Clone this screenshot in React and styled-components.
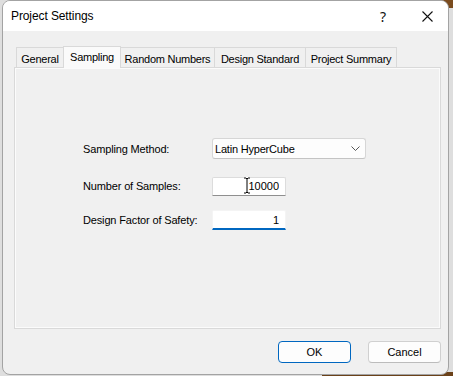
import React from 'react';
import styled, { createGlobalStyle } from 'styled-components';

const Global = createGlobalStyle`
  html, body { margin: 0; padding: 0; }
  body {
    width: 453px; height: 376px; overflow: hidden;
    font-family: "Liberation Sans", Arial, sans-serif;
    -webkit-font-smoothing: antialiased;
  }
`;

const Desktop = styled.div`
  width: 453px;
  height: 376px;
  box-sizing: border-box;
  padding: 0 4px 0 2px;
  background:
    linear-gradient(#7a4b1e, #7a4b1e) right top / 240px 8px no-repeat,
    linear-gradient(#6b4219, #6b4219) right bottom / 131px 4px no-repeat,
    #dedede;
`;

const Window = styled.div`
  width: 447px;
  height: 375px;
  box-sizing: border-box;
  border: 1px solid #a3a3a3;
  border-radius: 8px;
  overflow: hidden;
  background: #f0f0f0;
  display: flex;
  flex-direction: column;
`;

const TitleBar = styled.div`
  flex: 0 0 30px;
  display: flex;
  align-items: center;
  background: #ffffff;
  padding-left: 8px;
`;

const Title = styled.div`
  font-size: 12px;
  color: #000;
  flex: 1;
  letter-spacing: -0.1px;
`;

const CaptionButton = styled.div`
  width: ${p => p.$w}px;
  height: 30px;
  display: flex;
  align-items: center;
  justify-content: center;
  font-size: 14px;
  color: #111;
  font-family: "Noto Sans", sans-serif;
`;

const Body = styled.div`
  flex: 1;
  display: flex;
  flex-direction: column;
  padding: 15px 7px 0 11px;
`;

const TabStrip = styled.div`
  height: 21px;
  display: flex;
  align-items: flex-end;
  padding-left: 2px;
  position: relative;
  z-index: 1;
`;

const Tab = styled.div`
  box-sizing: border-box;
  width: ${p => p.$w}px;
  height: ${p => (p.$active ? 22 : 20)}px;
  margin-bottom: ${p => (p.$active ? -1 : 0)}px;
  margin-left: -1px;
  border: 1px solid #d9d9d9;
  border-bottom: none;
  background: ${p => (p.$active ? '#fafafa' : '#f0f0f0')};
  display: flex;
  align-items: center;
  justify-content: center;
  padding-top: ${p => (p.$active ? 0 : 2)}px;
  padding-bottom: ${p => (p.$active ? 2 : 0)}px;
  font-size: 11px;
  letter-spacing: -0.25px;
  color: #000;
  white-space: nowrap;
  position: relative;
  z-index: ${p => (p.$active ? 2 : 1)};
  &:first-child { margin-left: 0; }
`;

const Panel = styled.div`
  flex: 0 0 262px;
  box-sizing: border-box;
  border: 1px solid #d9d9d9;
  box-shadow: inset 0 0 0 1px #fbfbfb;
  background: #f0f0f0;
  padding: 70px 0 0 68px;
`;

const Form = styled.div`
  display: flex;
  flex-direction: column;
`;

const Row = styled.div`
  display: grid;
  grid-template-columns: 129px auto;
  align-items: center;
  margin-top: ${p => p.$gap}px;
`;

const Label = styled.div`
  font-size: 11px;
  letter-spacing: -0.15px;
  color: #000;
`;

const Select = styled.div`
  box-sizing: border-box;
  width: 154px;
  height: 21px;
  border: 1px solid #d6d6d6;
  border-bottom-color: #c4c4c4;
  border-radius: 3px;
  background: #fdfdfd;
  display: flex;
  align-items: center;
  justify-content: space-between;
  padding: 0 5px 0 2px;
  font-size: 11px;
  letter-spacing: -0.2px;
  color: #000;
`;

const FieldWrap = styled.div`
  position: relative;
  width: 74px;
`;

const TextField = styled.input`
  box-sizing: border-box;
  width: 74px;
  height: ${p => (p.$focused ? 20 : 19)}px;
  margin: 0;
  border: 1px solid ${p => (p.$focused ? '#f4f4f4' : '#dcdcdc')};
  border-bottom: ${p => (p.$focused ? '2px solid #0067c0' : '1px solid #8f8f8f')};
  border-radius: 2px 2px 0 0;
  background: #ffffff;
  padding: 0 6px 0 2px;
  text-align: right;
  font-family: "Liberation Sans", Arial, sans-serif;
  font-size: 11px;
  color: #000;
  outline: none;
`;

const Cursor = styled.svg`
  position: absolute;
  left: 31px;
  top: 1px;
  pointer-events: none;
`;

const Footer = styled.div`
  flex: 1;
  display: flex;
  justify-content: flex-end;
  align-items: flex-start;
  gap: 17px;
  padding-top: 12px;
`;

const Button = styled.div`
  box-sizing: border-box;
  width: 73px;
  height: 22px;
  border: 1px solid ${p => (p.$primary ? '#0067c0' : '#d0d0d0')};
  border-bottom-color: ${p => (p.$primary ? '#0067c0' : '#bcbcbc')};
  border-radius: 4px;
  background: #fdfdfd;
  display: flex;
  align-items: center;
  justify-content: center;
  font-size: 11px;
  color: #000;
`;

const tabs = [
  { label: 'General', w: 48 },
  { label: 'Sampling', w: 58, active: true },
  { label: 'Random Numbers', w: 95 },
  { label: 'Design Standard', w: 92 },
  { label: 'Project Summary', w: 92 },
];

export default function App() {
  return (
    <>
      <Global />
      <Desktop>
        <Window>
          <TitleBar>
            <Title>Project Settings</Title>
            <CaptionButton $w={46}>?</CaptionButton>
            <CaptionButton $w={42}>
              <svg width="11" height="11" viewBox="0 0 11 11">
                <path d="M0.5 0.5 L10.5 10.5 M10.5 0.5 L0.5 10.5" stroke="#111" strokeWidth="1.1" fill="none" />
              </svg>
            </CaptionButton>
          </TitleBar>
          <Body>
            <TabStrip>
              {tabs.map(t => (
                <Tab key={t.label} $w={t.w} $active={t.active}>{t.label}</Tab>
              ))}
            </TabStrip>
            <Panel>
              <Form>
                <Row $gap={0}>
                  <Label>Sampling Method:</Label>
                  <Select>
                    <span>Latin HyperCube</span>
                    <svg width="9" height="5" viewBox="0 0 9 5">
                      <path d="M0.5 0.5 L4.5 4.5 L8.5 0.5" stroke="#444" strokeWidth="0.9" fill="none" />
                    </svg>
                  </Select>
                </Row>
                <Row $gap={17}>
                  <Label>Number of Samples:</Label>
                  <FieldWrap>
                    <TextField readOnly value="10000" />
                    <Cursor width="8" height="17" viewBox="0 0 8 17">
                      <path d="M1 1 H3 L4 2 L5 1 H7 M4 2 V15 M1 16 H3 L4 15 L5 16 H7" stroke="#fff" strokeWidth="2.4" fill="none" />
                      <path d="M1 1 H3 L4 2 L5 1 H7 M4 2 V15 M1 16 H3 L4 15 L5 16 H7" stroke="#000" strokeWidth="1" fill="none" />
                    </Cursor>
                  </FieldWrap>
                </Row>
                <Row $gap={14}>
                  <Label>Design Factor of Safety:</Label>
                  <FieldWrap>
                    <TextField readOnly value="1" $focused />
                  </FieldWrap>
                </Row>
              </Form>
            </Panel>
            <Footer>
              <Button $primary>OK</Button>
              <Button>Cancel</Button>
            </Footer>
          </Body>
        </Window>
      </Desktop>
    </>
  );
}
